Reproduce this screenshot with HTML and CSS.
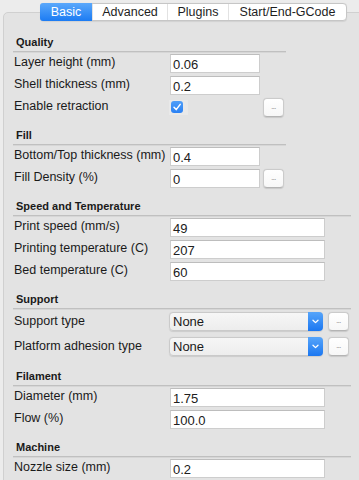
FILE: index.html
```html
<!DOCTYPE html>
<html>
<head>
<meta charset="utf-8">
<link rel="stylesheet" href="styles.css">
</head>
<body>
<div class="window">
  <div class="tabs">
    <span class="tab tab-basic active">Basic</span>
    <span class="tab tab-adv">Advanced</span>
    <span class="tab tab-plug">Plugins</span>
    <span class="tab tab-gcode">Start/End-GCode</span>
  </div>
  <div class="panel">
    <section class="section narrow">
      <div class="sec-head">Quality</div>
      <div class="rows">
        <span class="lbl">Layer height (mm)</span><span class="field">0.06</span>
        <span class="lbl">Shell thickness (mm)</span><span class="field">0.2</span>
        <span class="lbl">Enable retraction</span>
        <span class="check-wrap"><span class="check"><svg width="10" height="10" viewBox="0 0 10 10"><path d="M2 5.3 L4.2 7.6 L8.2 2.4" fill="none" stroke="#fff" stroke-width="1.5" stroke-linecap="round" stroke-linejoin="round"/></svg></span></span>
        <span class="more">...</span>
      </div>
    </section>
    <section class="section narrow">
      <div class="sec-head">Fill</div>
      <div class="rows">
        <span class="lbl">Bottom/Top thickness (mm)</span><span class="field">0.4</span>
        <span class="lbl">Fill Density (%)</span><span class="field">0</span><span class="more">...</span>
      </div>
    </section>
    <section class="section">
      <div class="sec-head">Speed and Temperature</div>
      <div class="rows">
        <span class="lbl">Print speed (mm/s)</span><span class="field wide">49</span>
        <span class="lbl">Printing temperature (C)</span><span class="field wide">207</span>
        <span class="lbl">Bed temperature (C)</span><span class="field wide">60</span>
      </div>
    </section>
    <section class="section">
      <div class="sec-head">Support</div>
      <div class="rows tall">
        <span class="lbl">Support type</span>
        <span class="select"><span class="sel-text">None</span><span class="sel-arrow"><svg width="7" height="5" viewBox="0 0 7 5"><path d="M1 1.2 L3.5 3.6 L6 1.2" fill="none" stroke="#fff" stroke-width="1.3" stroke-linecap="round" stroke-linejoin="round"/></svg></span></span>
        <span class="more more-wide">...</span>
        <span class="lbl">Platform adhesion type</span>
        <span class="select"><span class="sel-text">None</span><span class="sel-arrow"><svg width="7" height="5" viewBox="0 0 7 5"><path d="M1 1.2 L3.5 3.6 L6 1.2" fill="none" stroke="#fff" stroke-width="1.3" stroke-linecap="round" stroke-linejoin="round"/></svg></span></span>
        <span class="more more-wide">...</span>
      </div>
    </section>
    <section class="section">
      <div class="sec-head">Filament</div>
      <div class="rows">
        <span class="lbl">Diameter (mm)</span><span class="field wide">1.75</span>
        <span class="lbl">Flow (%)</span><span class="field wide">100.0</span>
      </div>
    </section>
    <section class="section">
      <div class="sec-head">Machine</div>
      <div class="rows">
        <span class="lbl">Nozzle size (mm)</span><span class="field wide">0.2</span>
      </div>
    </section>
  </div>
</div>
</body>
</html>
```

FILE: styles.css
```css
html, body {
  margin: 0;
  padding: 0;
  overflow: hidden;
  background: #ececec;
  font-family: "Liberation Sans", Arial, sans-serif;
  color: #1a1a1a;
}

.window {
  width: 359px;
  height: 480px;
  overflow: hidden;
}

.tabs {
  position: relative;
  z-index: 1;
  display: flex;
  margin: 3px 0 0 40px;
  width: max-content;
  height: 18px;
  border: 1px solid #c6c6c6;
  border-radius: 4px;
  background: #fff;
  box-sizing: border-box;
  box-shadow: 0 0.5px 1px rgba(0,0,0,0.08);
}

.tab {
  display: flex;
  align-items: center;
  justify-content: center;
  font-size: 12.5px;
  color: #1e1e1e;
  border-left: 1px solid #e2e2e2;
  box-sizing: border-box;
  height: 16px;
}
.tab:first-child { border-left: none; }
.tab.active {
  background: linear-gradient(#5ba8fb, #1c7bf3);
  color: #fff;
  border-radius: 3px 0 0 3px;
  margin: -1px 0 -1px -1px;
  height: 18px;
}
.tab-basic { width: 52px; }
.tab-adv { width: 75px; }
.tab-plug { width: 61px; }
.tab-gcode { width: 118px; }

.panel {
  margin: -9px -12px 0 3px;
  height: 520px;
  border: 1px solid #d0d0d0;
  border-radius: 5px;
  background: #e3e3e3;
  padding: 22px 0 0 9px;
  box-sizing: border-box;
}

.section { width: 338px; }
.section.narrow { width: 273px; }
.section + .section { margin-top: 10px; }

.sec-head {
  font-size: 11px;
  font-weight: bold;
  line-height: 14px;
  padding: 0 0 2px 3px;
  border-bottom: 1px solid #c0c0c0;
  box-shadow: 0 1px 0 #d6d6d6;
  color: #1a1a1a;
}

.rows {
  display: grid;
  grid-template-columns: 156px max-content max-content;
  grid-auto-rows: 22px;
  align-items: center;
  padding-left: 1px;
}
.rows.tall { grid-auto-rows: 25px; }

.lbl {
  grid-column: 1;
  font-size: 12.5px;
  line-height: 14px;
  white-space: nowrap;
  position: relative;
  top: -1px;
}

.field {
  grid-column: 2;
  width: 90px;
  height: 19px;
  box-sizing: border-box;
  background: #fff;
  border: 1px solid #cdcdcd;
  border-top-color: #bdbdbd;
  font-size: 13px;
  line-height: 17px;
  padding: 1px 0 0 2px;
  color: #202020;
}
.field.wide { width: 155px; }

.check-wrap {
  grid-column: 2;
  width: 19px;
  height: 15px;
  background: #e9e9e9;
  display: flex;
  align-items: center;
  padding-left: 2px;
  box-sizing: border-box;
  margin-left: -1px;
}
.check {
  width: 12px;
  height: 12px;
  border-radius: 3px;
  background: linear-gradient(#4f9ef8, #2a80f3);
  display: flex;
  align-items: center;
  justify-content: center;
}

.more {
  grid-column: 3;
  width: 21px;
  height: 19px;
  margin-left: 3px;
  box-sizing: border-box;
  border: 1px solid #cbcbcb;
  border-bottom-color: #b4b4b4;
  border-radius: 4px;
  background: linear-gradient(#ffffff, #f7f7f7);
  box-shadow: 0 0.5px 1px rgba(0,0,0,0.12);
  font-size: 7px;
  line-height: 16px;
  text-align: center;
  color: #6a6a6a;
  letter-spacing: -0.5px;
}
.more-wide { margin-left: 5px; }

.select {
  grid-column: 2;
  width: 154px;
  height: 19px;
  margin-left: -1px;
  box-sizing: border-box;
  display: flex;
  border: 1px solid #cacaca;
  border-radius: 4px;
  background: linear-gradient(#f6f6f6, #ededed);
  box-shadow: 0 0.5px 1px rgba(0,0,0,0.1);
}
.sel-text {
  flex: 1;
  font-size: 13px;
  line-height: 17px;
  padding-left: 3px;
  color: #1a1a1a;
}
.sel-arrow {
  width: 15px;
  margin: -1px -1px -1px 0;
  border-radius: 0 4px 4px 0;
  background: linear-gradient(#57a5fa, #1b77f1);
  display: flex;
  align-items: center;
  justify-content: center;
}
```
